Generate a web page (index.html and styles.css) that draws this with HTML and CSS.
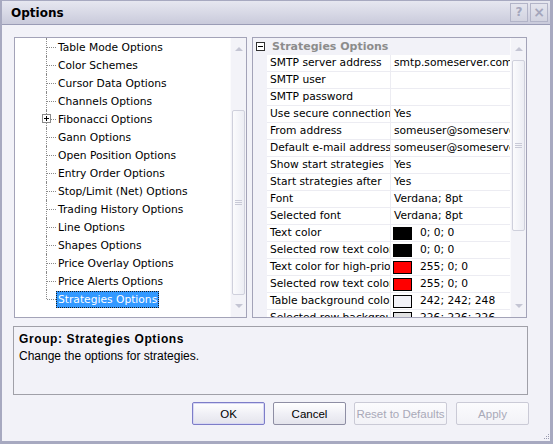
FILE: index.html
```html
<!DOCTYPE html>
<html>
<head>
<meta charset="utf-8">
<link rel="stylesheet" href="styles.css">
</head>
<body>
<div class="window">
  <div class="titlebar">
    <span class="title">Options</span>
    <div class="tb-btns">
      <span class="tb-btn">?</span>
      <span class="tb-btn close">×</span>
    </div>
  </div>
  <div class="content">
    <div class="panes">
      <div class="tree">
        <ul class="nodes">
          <li class="node"><span class="label">Table Mode Options</span></li>
          <li class="node"><span class="label">Color Schemes</span></li>
          <li class="node"><span class="label">Cursor Data Options</span></li>
          <li class="node"><span class="label">Channels Options</span></li>
          <li class="node"><span class="expander"></span><span class="label">Fibonacci Options</span></li>
          <li class="node"><span class="label">Gann Options</span></li>
          <li class="node"><span class="label">Open Position Options</span></li>
          <li class="node"><span class="label">Entry Order Options</span></li>
          <li class="node"><span class="label">Stop/Limit (Net) Options</span></li>
          <li class="node"><span class="label">Trading History Options</span></li>
          <li class="node"><span class="label">Line Options</span></li>
          <li class="node"><span class="label">Shapes Options</span></li>
          <li class="node"><span class="label">Price Overlay Options</span></li>
          <li class="node"><span class="label">Price Alerts Options</span></li>
          <li class="node last"><span class="label selected">Strategies Options</span></li>
        </ul>
        <div class="scrollbar">
          <div class="sb-btn"><span class="arrow up"></span></div>
          <div class="sb-track tree-track"><div class="thumb tree-thumb"><span class="grip"></span></div></div>
          <div class="sb-btn"><span class="arrow down"></span></div>
        </div>
      </div>
      <div class="grid">
        <div class="props">
          <div class="cat"><span class="collapser"></span><span class="cat-label">Strategies Options</span></div>
          <div class="row"><span class="margin"></span><span class="name">SMTP server address</span><span class="value">smtp.someserver.com</span></div>
          <div class="row"><span class="margin"></span><span class="name">SMTP user</span><span class="value"></span></div>
          <div class="row"><span class="margin"></span><span class="name">SMTP password</span><span class="value"></span></div>
          <div class="row"><span class="margin"></span><span class="name">Use secure connection</span><span class="value">Yes</span></div>
          <div class="row"><span class="margin"></span><span class="name">From address</span><span class="value">someuser@someserver.com</span></div>
          <div class="row"><span class="margin"></span><span class="name">Default e-mail address</span><span class="value">someuser@someserver.com</span></div>
          <div class="row"><span class="margin"></span><span class="name">Show start strategies</span><span class="value">Yes</span></div>
          <div class="row"><span class="margin"></span><span class="name">Start strategies after</span><span class="value">Yes</span></div>
          <div class="row"><span class="margin"></span><span class="name">Font</span><span class="value">Verdana; 8pt</span></div>
          <div class="row"><span class="margin"></span><span class="name">Selected font</span><span class="value">Verdana; 8pt</span></div>
          <div class="row"><span class="margin"></span><span class="name">Text color</span><span class="value"><span class="swatch sw-black"></span>0; 0; 0</span></div>
          <div class="row"><span class="margin"></span><span class="name">Selected row text color</span><span class="value"><span class="swatch sw-black"></span>0; 0; 0</span></div>
          <div class="row"><span class="margin"></span><span class="name">Text color for high-priority</span><span class="value"><span class="swatch sw-red"></span>255; 0; 0</span></div>
          <div class="row"><span class="margin"></span><span class="name">Selected row text color</span><span class="value"><span class="swatch sw-red"></span>255; 0; 0</span></div>
          <div class="row"><span class="margin"></span><span class="name">Table background color</span><span class="value"><span class="swatch sw-table"></span>242; 242; 248</span></div>
          <div class="row"><span class="margin"></span><span class="name">Selected row background</span><span class="value"><span class="swatch sw-sel"></span>226; 226; 226</span></div>
        </div>
        <div class="scrollbar">
          <div class="sb-btn"><span class="arrow up"></span></div>
          <div class="sb-track grid-track"><div class="thumb grid-thumb"><span class="grip"></span></div></div>
          <div class="sb-btn"><span class="arrow down"></span></div>
        </div>
      </div>
    </div>
    <div class="desc">
      <div class="desc-title">Group: Strategies Options</div>
      <div class="desc-text">Change the options for strategies.</div>
    </div>
    <div class="buttons">
      <button class="btn default">OK</button>
      <button class="btn">Cancel</button>
      <button class="btn wide disabled">Reset to Defaults</button>
      <button class="btn disabled">Apply</button>
    </div>
  </div>
  <svg class="grip-corner" width="8" height="8" viewBox="0 0 8 8">
    <rect x="6" y="1" width="1" height="1" fill="#9a9cb0"/>
    <rect x="4" y="3" width="1" height="1" fill="#9a9cb0"/>
    <rect x="6" y="3" width="1" height="1" fill="#9a9cb0"/>
    <rect x="2" y="5" width="1" height="1" fill="#9a9cb0"/>
    <rect x="4" y="5" width="1" height="1" fill="#9a9cb0"/>
    <rect x="6" y="5" width="1" height="1" fill="#9a9cb0"/>
  </svg>
</div>
</body>
</html>
```

FILE: styles.css
```css
html, body {
  margin: 0;
  padding: 0;
  background: #f2f2f8;
}
.window {
  position: relative;
  width: 553px;
  height: 444px;
  box-sizing: border-box;
  background: #f2f2f8;
  border-left: 2px solid #a7a9c0;
  border-right: 3px solid #a7a9c0;
  border-bottom: 3px solid #a7a9c0;
  border-top: 1px solid #a7a9c0;
  display: flex;
  flex-direction: column;
}
.titlebar {
  height: 23px;
  flex: none;
  display: flex;
  align-items: center;
  justify-content: space-between;
  background: linear-gradient(#e6e7f0, #d8d9e6 50%, #c9cadb);
  border-bottom: 1px solid #9a9cb6;
  padding-left: 9px;
  padding-right: 2px;
}
.title {
  font-family: "DejaVu Sans", Verdana, sans-serif;
  font-weight: bold;
  font-size: 12px;
  color: #000;
}
.tb-btns {
  display: flex;
  gap: 2px;
}
.tb-btn {
  width: 16px;
  height: 17px;
  border: 1px solid #b2b4c8;
  background: linear-gradient(#e4e5ee, #d2d3e0);
  color: #a4a6bc;
  font-family: "DejaVu Sans", sans-serif;
  font-weight: bold;
  font-size: 12px;
  line-height: 17px;
  text-align: center;
}
.tb-btn.close {
  font-size: 14px;
}
.content {
  flex: 1;
  padding: 12px 0 0 12px;
}
.panes {
  display: flex;
  gap: 5px;
  height: 281px;
}
.tree, .grid {
  box-sizing: border-box;
  height: 281px;
  background: #fff;
  border: 1px solid #a3a3b8;
  display: flex;
  overflow: hidden;
}
.tree {
  width: 233px;
}
.grid {
  width: 275px;
}
.nodes {
  list-style: none;
  margin: 0;
  padding: 0;
  width: 215px;
  font-family: "DejaVu Sans", Verdana, sans-serif;
  font-size: 10.7px;
  color: #000;
}
.node {
  position: relative;
  height: 18px;
  padding-left: 41px;
  display: flex;
  align-items: center;
}
.node::before {
  content: "";
  position: absolute;
  left: 31px;
  top: 0;
  bottom: 0;
  border-left: 1px dotted #8a8a8a;
}
.node.last::before {
  bottom: 9px;
}
.node::after {
  content: "";
  position: absolute;
  left: 32px;
  top: 9px;
  width: 9px;
  border-top: 1px dotted #8a8a8a;
}
.expander {
  position: absolute;
  left: 27px;
  top: 4px;
  width: 7px;
  height: 7px;
  border: 1px solid #8a8a8a;
  background: #fff;
  z-index: 1;
}
.expander::before {
  content: "";
  position: absolute;
  left: 1px;
  top: 3px;
  width: 5px;
  height: 1px;
  background: #000;
}
.expander::after {
  content: "";
  position: absolute;
  left: 3px;
  top: 1px;
  width: 1px;
  height: 5px;
  background: #000;
}
.label {
  display: inline-block;
  height: 17px;
  line-height: 17px;
  padding: 0 2px;
  white-space: nowrap;
}
.label.selected {
  background: #3399ff;
  color: #fff;
  border: 1px dotted #1a1a1a;
  box-sizing: border-box;
  padding: 0 1px;
  line-height: 15px;
}
.scrollbar {
  width: 16px;
  flex: none;
  display: flex;
  flex-direction: column;
  background: #f3f3f8;
  border-left: 1px solid #fbfbfd;
  box-sizing: border-box;
}
.sb-btn {
  height: 22px;
  flex: none;
  display: flex;
  align-items: center;
  justify-content: center;
}
.arrow {
  width: 0;
  height: 0;
  border-left: 4px solid transparent;
  border-right: 4px solid transparent;
}
.arrow.up {
  border-bottom: 4px solid #c4c5d3;
}
.arrow.down {
  border-top: 4px solid #c4c5d3;
}
.sb-track {
  flex: 1;
  display: flex;
  flex-direction: column;
  align-items: center;
}
.tree-track {
  padding-top: 50px;
}
.grid-track {
  padding-top: 0;
}
.thumb {
  width: 13px;
  box-sizing: border-box;
  border: 1px solid #cfd0dc;
  border-radius: 2px;
  background: linear-gradient(90deg, #fbfbfd, #ecedf4);
  display: flex;
  align-items: center;
  justify-content: center;
  flex: none;
}
.tree-thumb {
  height: 185px;
}
.grid-thumb {
  height: 171px;
}
.grip {
  width: 7px;
  height: 5px;
  background: repeating-linear-gradient(#c8c9d6 0 1px, transparent 1px 2px);
}
.props {
  width: 257px;
  font-family: "DejaVu Sans", Verdana, sans-serif;
  font-size: 10.7px;
  color: #000;
}
.cat {
  height: 17px;
  background: #f2f2f8;
  display: flex;
  align-items: center;
}
.collapser {
  position: relative;
  width: 7px;
  height: 7px;
  border: 1px solid #303030;
  margin-left: 3px;
  background: #fff;
  flex: none;
}
.collapser::before {
  content: "";
  position: absolute;
  left: 1px;
  top: 3px;
  width: 5px;
  height: 1px;
  background: #000;
}
.cat-label {
  margin-left: 7px;
  font-weight: bold;
  color: #8c8c8c;
  font-size: 11px;
  white-space: nowrap;
}
.row {
  height: 17px;
  display: flex;
}
.margin {
  width: 14px;
  flex: none;
  background: #f2f2f8;
}
.name, .value {
  box-sizing: border-box;
  height: 17px;
  border-bottom: 1px solid #ececf2;
  padding-left: 3px;
  line-height: 16px;
  white-space: nowrap;
  overflow: hidden;
  flex: none;
}
.name {
  width: 124px;
  border-right: 1px solid #ececf2;
}
.value {
  width: 119px;
  display: flex;
  align-items: center;
  padding-left: 3px;
}
.swatch {
  width: 19px;
  height: 13px;
  box-sizing: border-box;
  border: 1px solid #000;
  margin-left: -1px;
  margin-right: 8px;
  flex: none;
}
.sw-black { background: #000; }
.sw-red { background: #ff0000; }
.sw-table { background: #f2f2f8; }
.sw-sel { background: #e2e2e2; }
.desc {
  box-sizing: border-box;
  width: 515px;
  height: 69px;
  margin-top: 8px;
  margin-left: -1px;
  border: 1px solid #a0a0a8;
  padding: 4px 5px;
  font-family: "Liberation Sans", Arial, sans-serif;
  font-size: 12px;
  line-height: 17px;
  color: #000;
}
.desc-title {
  font-weight: bold;
  letter-spacing: 0.6px;
}
.buttons {
  display: flex;
  justify-content: flex-end;
  gap: 8px;
  width: 515px;
  margin-top: 7px;
}
.btn {
  width: 73px;
  height: 23px;
  box-sizing: border-box;
  border: 1px solid #8e8ea4;
  border-radius: 2px;
  background: linear-gradient(#ffffff, #f0f0f6 50%, #e4e4ec);
  font-family: "Liberation Sans", Arial, sans-serif;
  font-size: 11.5px;
  color: #000;
  padding: 0;
}
.btn.default {
  border-color: #7d7dc8;
  box-shadow: inset 0 0 0 1px #d8d8f4;
}
.btn.wide {
  width: 93px;
  margin-right: 1px;
}
.btn.disabled {
  border-color: #cacad6;
  color: #a9a9b8;
  background: linear-gradient(#fbfbfd, #f2f2f7);
}
.grip-corner {
  position: absolute;
  right: 0;
  bottom: 0;
}
```
